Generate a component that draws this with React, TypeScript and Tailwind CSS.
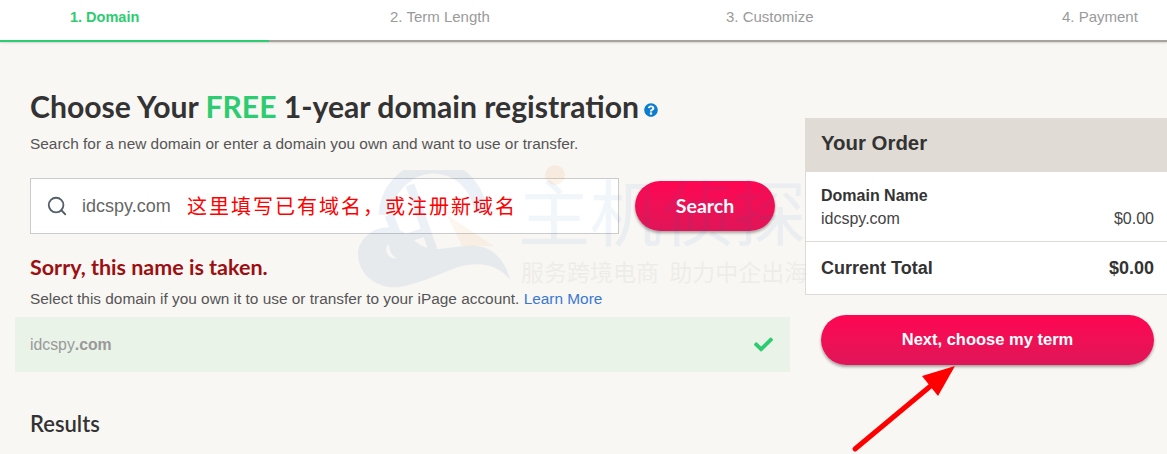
import React from 'react';
import { Search } from 'lucide-react';
import { FaCheck, FaQuestionCircle } from 'react-icons/fa';

const Steps = () => (
  <div className="bg-white">
    <div className="flex h-10 items-center pl-[70px] pb-[5px] text-[15px] text-[#9a9a9a]">
      <span className="w-[320px] text-[14.5px] font-bold text-[#2ecc71]">1. Domain</span>
      <span className="w-[336px]">2. Term Length</span>
      <span className="w-[336px]">3. Customize</span>
      <span>4. Payment</span>
    </div>
    <div className="h-[2px] bg-[#a6a39c] shadow-[0_1px_2px_rgba(0,0,0,0.15)]">
      <div className="h-[2px] w-[269px] bg-[#2ecc71]" />
    </div>
  </div>
);

const PinkButton = ({ label, className }: { label: string; className: string }) => (
  <button className={`rounded-full bg-gradient-to-b from-[#ff0552] to-[#df1558] font-bold text-white shadow-[0_2px_3px_rgba(0,0,0,0.35)] ${className}`}>
    {label}
  </button>
);

const DomainSearch = () => (
  <div className="w-[790px] shrink-0">
    <h1 className="ml-[30px] mt-[44px] flex items-center font-['Lato'] text-[30.15px] leading-[40px] font-bold text-[#333]">
      <span>
        Choose Your <span className="text-[#2ecc71]">FREE</span> 1-year domain registration
      </span>
      <FaQuestionCircle className="ml-[5px] mt-[7px] text-[14px] text-[#0b7dd1]" />
    </h1>
    <p className="ml-[30px] mt-[8px] text-[15.4px] leading-[20px] text-[#555]">
      Search for a new domain or enter a domain you own and want to use or transfer.
    </p>
    <div className="ml-[30px] mt-[24px] flex items-center gap-4">
      <div className="flex h-[56px] w-[589px] items-center border border-[#c9cbce] bg-white pl-[15px]">
        <Search size={22} strokeWidth={2} className="text-[#56606a]" />
        <span className="ml-[14px] w-[105px] text-[18px] text-[#666]">idcspy.com</span>
        <span className="font-['Noto_Sans_CJK_SC'] text-[20px] tracking-[2px] text-[#ff0000]">
          这里填写已有域名，或注册新域名
        </span>
      </div>
      <PinkButton label="Search" className="h-[50px] w-[140px] font-['Lato'] text-[19.5px]" />
    </div>
    <h2 className="ml-[30px] mt-[20px] font-['Lato'] text-[21.5px] leading-[26px] font-bold text-[#9c0f12]">
      Sorry, this name is taken.
    </h2>
    <p className="ml-[30px] mt-[9px] text-[15.4px] leading-[20px] text-[#555]">
      Select this domain if you own it to use or transfer to your iPage account.{' '}
      <span className="text-[#3a78d4]">Learn More</span>
    </p>
    <div className="ml-[15px] mt-[8px] flex h-[55px] items-center justify-between bg-[#e9f3e8] pl-[15px] pr-[17px]">
      <span className="text-[15.8px] text-[#999]">
        idcspy<span className="font-bold">.com</span>
      </span>
      <FaCheck className="text-[19px] text-[#2ecc71]" />
    </div>
    <h3 className="ml-[30px] mt-[38px] font-['Lato'] text-[22px] leading-[28px] font-semibold text-[#333]">Results</h3>
  </div>
);

const OrderSummary = () => (
  <div className="ml-[15px] mt-[76px] flex-1">
    <div className="flex h-[54px] items-center bg-[#e0dbd5] pb-[4px] pl-4 text-[20.4px] font-bold text-[#333]">Your Order</div>
    <div className="border-b border-l border-[#dddbd8] bg-white text-[#333]">
      <div className="h-[70px] border-b border-[#dddbd8] pl-[15px] pr-[13px] pt-[14px]">
        <div className="text-[16px] leading-[20px] font-bold">Domain Name</div>
        <div className="mt-[1px] flex items-center justify-between text-[16px] leading-[24px] text-[#444]">
          <span>idcspy.com</span>
          <span>$0.00</span>
        </div>
      </div>
      <div className="flex h-[52px] items-center justify-between pl-[15px] pr-[13px] text-[18px] font-bold">
        <span>Current Total</span>
        <span>$0.00</span>
      </div>
    </div>
    <div className="ml-4 mr-[13px] mt-[20px]">
      <PinkButton label="Next, choose my term" className="h-[50px] w-full pb-[2px] text-[16.5px]" />
    </div>
  </div>
);

// faint site watermark laid over the page
const Watermark = () => (
  <div className="pointer-events-none absolute left-[355px] top-[165px] h-[140px] w-[460px]">
    <svg width="160" height="130" viewBox="0 0 160 130" className="absolute left-0 top-[5px] opacity-[0.08]">
      <path d="M30 45 C32 12 60 -3 78 -3 C102 -3 122 14 126 42" fill="none" stroke="#1f5f9f" strokeWidth="13" />
      <path d="M55 15 L78 80 M34 45 L44 70 M40 72 L70 62" fill="none" stroke="#1f5f9f" strokeWidth="9" />
      <path d="M3 82 C5 66 22 55 38 58 C48 60 56 68 64 74 C84 88 115 66 138 82 C148 90 153 100 155 110 C146 98 132 92 112 95 C94 98 78 110 45 117 C22 120 2 104 3 82 Z M34 74 C28 78 32 90 42 88 C36 86 34 80 34 74 Z" fill="#1f5f9f" fillRule="evenodd" />
    </svg>
    <svg width="160" height="130" viewBox="0 0 160 130" className="absolute left-0 top-[5px] opacity-[0.07]">
      <path d="M92 45 L139 76 L107 76 Z" fill="#f08a24" />
    </svg>
    <div className="absolute left-[190px] top-0 h-5 w-5 rounded-full bg-[#f08a24] opacity-[0.1]" />
    <div className="absolute left-[163px] top-[2px] font-['Noto_Sans_CJK_SC'] text-[72px] leading-[84px] whitespace-nowrap text-[#1f6fb5] opacity-[0.06]">
      主机侦探
    </div>
    <div className="absolute left-[166px] top-[90px] font-['Noto_Sans_CJK_SC'] text-[23px] leading-[32px] whitespace-nowrap text-[#888] opacity-[0.09]">
      服务跨境电商&nbsp;&nbsp;助力中企出海
    </div>
  </div>
);

const App = () => {
  return (
    <div className="relative h-[454px] w-[1167px] overflow-hidden bg-[#f9f7f4] font-['Liberation_Sans',sans-serif]">
      <Steps />
      <div className="flex">
        <DomainSearch />
        <OrderSummary />
      </div>
      <Watermark />
      {/* hand-drawn annotation arrow */}
      <svg width="120" height="100" viewBox="0 0 120 100" className="pointer-events-none absolute left-[845px] top-[360px]">
        <line x1="10" y1="89" x2="88" y2="24" stroke="#ff0000" strokeWidth="5" strokeLinecap="round" />
        <polygon points="110,6 77,16 93,36" fill="#ff0000" />
      </svg>
    </div>
  );
};

export default App;
